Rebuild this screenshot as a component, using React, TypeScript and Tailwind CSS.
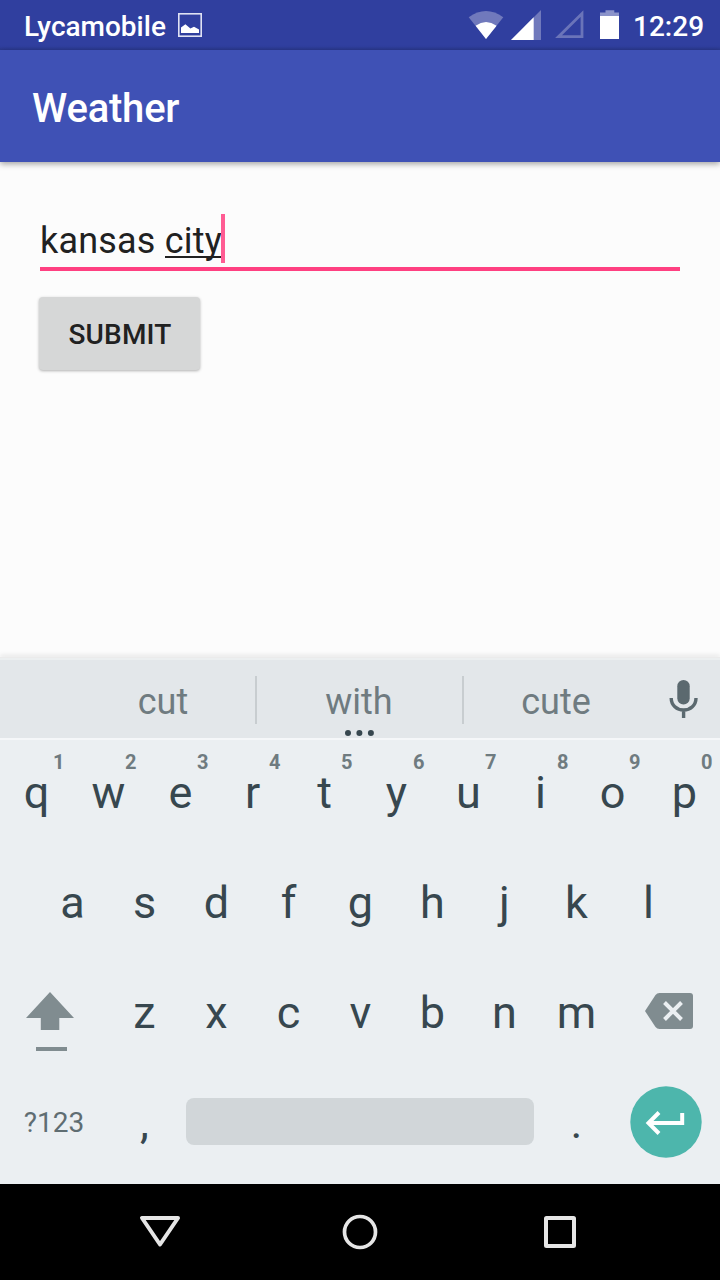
import type { ReactNode } from "react";

const topRow = ["q", "w", "e", "r", "t", "y", "u", "i", "o", "p"];
const homeRow = ["a", "s", "d", "f", "g", "h", "j", "k", "l"];
const bottomRow = ["z", "x", "c", "v", "b", "n", "m"];

function Key({ children, hint }: { children: ReactNode; hint?: string }) {
  return (
    <div className="relative flex h-[110px] w-[72px] items-center justify-center pb-[2px] pl-px text-[45px] leading-none text-[#37474f]">
      {children}
      {hint && (
        <span className="absolute top-[14px] right-[7.5px] text-[20px] leading-5 font-bold text-[#6f7b80]">
          {hint}
        </span>
      )}
    </div>
  );
}

function StatusBar() {
  return (
    <header className="flex h-[50px] items-center bg-[#303f9f] bg-linear-to-b from-[#303f9f] from-92% to-[#2b3990] pl-6 text-[28px] font-medium text-white">
      <span className="pt-[3px]">Lycamobile</span>
      <svg className="ml-3 -mt-px" width="24" height="24" viewBox="0 0 24 24">
        <rect x="0.8" y="0.8" width="22.4" height="22.4" fill="none" stroke="#dfe2f3" strokeWidth="1.6" />
        <path d="M3 20V14.5L7.4 11.2L12.4 15.6L16 13.8L21 16.5V20Z" fill="#fff" />
      </svg>
      <svg className="ml-auto shrink-0" width="160" height="50" viewBox="468 0 160 50">
        <path d="M468.7 17.3Q486 4.8 503.3 17.3L486 39Z" fill="#7079bc" />
        <path d="M475.6 25.7Q486 18.3 496.6 25.7L486 39Z" fill="#fff" />
        <path d="M541 10V40H511Z" fill="#7079bc" />
        <path d="M533.7 17.3V40H511Z" fill="#fff" />
        <path d="M582 13.5V36.7H558.5Z" fill="none" stroke="#6a74b9" strokeWidth="2.8" />
        <path d="M600 16.5V12.5H605.5V10.2H614.3V12.5H619V16.5Z" fill="#8b93ca" />
        <rect x="600" y="16" width="19" height="23" fill="#fff" />
      </svg>
      <span className="w-[92px] pt-[3px] pl-[5px]">12:29</span>
    </header>
  );
}

function Suggestions() {
  return (
    <div className="flex h-[78px] items-center bg-[#e3e7ea] text-[36px] text-[#6f7b80]">
      <div className="w-[255px] pt-[6px] pl-[71px] text-center">cut</div>
      <div className="mt-[2px] h-12 w-[2px] bg-[#c8cdd0]" />
      <div className="relative w-[205px] pt-[6px] pr-px text-center">
        with
        <svg className="absolute bottom-[-8px] left-[87px]" width="32" height="8" viewBox="0 0 32 8">
          <circle cx="4" cy="4" r="3" fill="#37474f" />
          <circle cx="15.4" cy="4" r="3" fill="#37474f" />
          <circle cx="26.9" cy="4" r="3" fill="#37474f" />
        </svg>
      </div>
      <div className="mt-[2px] h-12 w-[2px] bg-[#c8cdd0]" />
      <div className="w-[184px] pt-[6px] text-center">cute</div>
      <svg className="-mt-[2px] ml-5" width="32" height="42" viewBox="0 0 32 42">
        <rect x="9.3" y="3" width="12.4" height="24.5" rx="6.2" fill="#5b696f" />
        <path d="M3.2 21C3.2 28.2 8.8 33 15.6 33S28 28.2 28 21M15.6 33V41" fill="none" stroke="#5b696f" strokeWidth="3.4" />
      </svg>
    </div>
  );
}

function Keyboard() {
  return (
    <section className="flex h-[446px] flex-col bg-[#ebeff2] shadow-[inset_0_2px_0_#f5f7f9]">
      <div className="flex">
        {topRow.map((k, i) => (
          <Key key={k} hint={String((i + 1) % 10)}>{k}</Key>
        ))}
      </div>
      <div className="flex justify-center">
        {homeRow.map((k) => (
          <Key key={k}>{k}</Key>
        ))}
      </div>
      <div className="flex">
        <svg className="w-[108px]" height="110" viewBox="0 958 108 110">
          <path d="M50 992L74 1018H59.3V1030H40.8V1018H26Z" fill="#808c90" />
          <rect x="36" y="1047" width="31" height="4" fill="#808c90" />
        </svg>
        {bottomRow.map((k) => (
          <Key key={k}>{k}</Key>
        ))}
        <svg className="w-[108px]" height="110" viewBox="612 958 108 110">
          <path d="M645 1011L655.5 995Q657 993 659.5 993H690Q693 993 693 996V1026Q693 1029 690 1029H659.5Q657 1029 655.5 1027Z" fill="#808c90" />
          <path d="M664.5 1002.5L681.5 1019.5M681.5 1002.5L664.5 1019.5" stroke="#ebeff2" strokeWidth="4" />
        </svg>
      </div>
      <div className="flex h-[110px]">
        <div className="flex w-[108px] items-center justify-center text-[28px] text-[#5f6d72]">?123</div>
        <Key>,</Key>
        <div className="mx-[6px] mt-[30px] h-[47px] w-[348px] rounded-[8px] bg-[#d1d6d9]" />
        <Key>.</Key>
        <svg className="w-[108px]" height="110" viewBox="612 1068 108 110">
          <circle cx="666" cy="1122" r="35.7" fill="#4db6ac" />
          <path d="M659 1112.5L648.5 1123L659 1133.5M648.5 1123H682.2V1113" fill="none" stroke="#fff" strokeWidth="4" />
        </svg>
      </div>
    </section>
  );
}

export default function App() {
  return (
    <div className="flex h-[1280px] w-[720px] flex-col overflow-hidden bg-[#fcfcfc] font-['Roboto',sans-serif]">
      <StatusBar />
      <div className="z-10 flex h-[112px] items-center bg-[#3f51b5] pt-[5px] pl-8 text-[40px] font-medium tracking-[-0.2px] text-white shadow-[0_2px_6px_rgba(0,0,0,0.36)]">
        Weather
      </div>
      <main className="flex h-[495px] flex-col items-start px-10 pt-[52px]">
        <div className="flex h-[57px] w-full border-b-4 border-[#ff4081] text-[36px] leading-[55px] tracking-[0.2px] text-[#212121]">
          <span className="whitespace-pre">kansas </span>
          <span className="h-[44px] border-b-2 border-[#212121]">city</span>
          <span className="-ml-px h-[49px] w-1 bg-[#ff5c93]" />
        </div>
        <button className="mt-[26px] -ml-px h-[73px] w-[161px] rounded-[4px] bg-[#d6d7d7] pt-[2px] pl-px text-[28px] font-medium tracking-[0.2px] text-[#212121] shadow-[0_1px_3px_rgba(0,0,0,0.3)]">
          SUBMIT
        </button>
      </main>
      <div className="h-[3px] border-b-2 border-[#eceff0] bg-[#ebebeb] shadow-[0_-2px_4px_rgba(0,0,0,0.1)]" />
      <Suggestions />
      <Keyboard />
      <nav className="flex h-24 items-center bg-black px-[60px]">
        <svg width="200" height="40" viewBox="60 1212 200 40">
          <path d="M142 1218H178L160 1244.5Z" fill="none" stroke="#e6e6e6" strokeWidth="4" strokeLinejoin="round" />
        </svg>
        <svg width="200" height="40" viewBox="260 1212 200 40">
          <circle cx="360" cy="1232" r="15.5" fill="none" stroke="#e6e6e6" strokeWidth="3.7" />
        </svg>
        <svg width="200" height="40" viewBox="460 1212 200 40">
          <rect x="546" y="1218" width="28" height="28" rx="0.5" fill="none" stroke="#e6e6e6" strokeWidth="4" strokeLinejoin="round" />
        </svg>
      </nav>
    </div>
  );
}
